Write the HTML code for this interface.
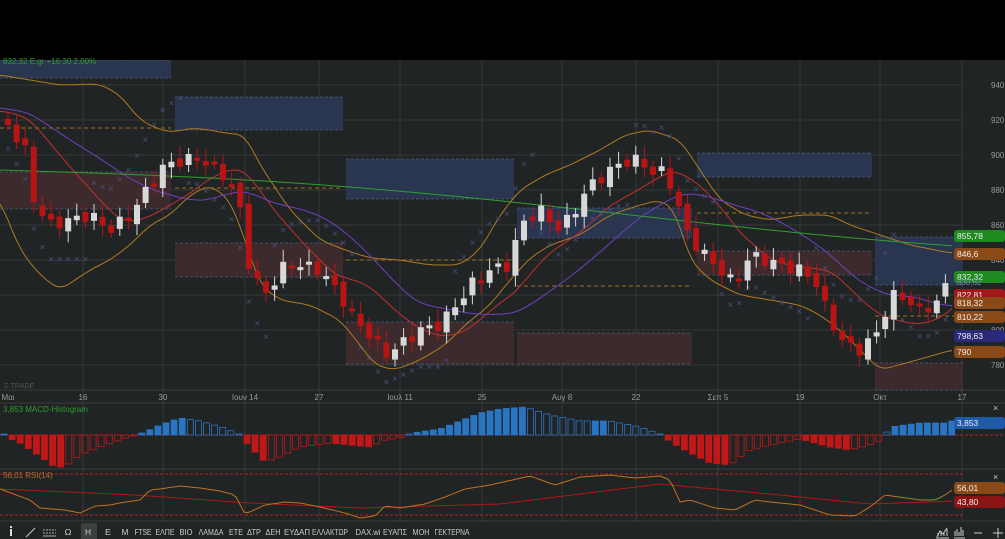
<!DOCTYPE html><html><head><meta charset="utf-8"><style>
body{margin:0;width:1005px;height:539px;overflow:hidden;background:#000;font-family:"Liberation Sans","Noto Sans CJK SC",sans-serif}
svg{position:absolute;left:0;top:0}
text{font-family:"Liberation Sans",sans-serif}
</style></head><body>
<svg id="s" width="1005" height="539" xmlns="http://www.w3.org/2000/svg">
<rect x="0" y="60" width="1005" height="479" fill="#212424"/>
<g id="g"></g>
<rect x="0" y="0" width="1005" height="60" fill="#000"/>
<text x="3" y="64" fill="#2e9e2e" font-size="8">832,32 Ε.gr +16,30 2,00%</text>
</svg>
<script>
var g=document.getElementById('g'),h='';
function A(s){h+=s}
var vx=[83,163,245,319,400,482,562,636,718,800,880,962];
vx.forEach(function(x){A('<line x1="'+x+'" y1="60" x2="'+x+'" y2="522" stroke="#353838" stroke-width="1"/>')});
var pl=[[940,85],[920,120],[900,155],[880,190],[860,225],[840,260],[820,295],[800,330],[780,365]];
pl.forEach(function(p){A('<line x1="0" y1="'+p[1]+'" x2="962" y2="'+p[1]+'" stroke="#353838"/>');A('<text x="991" y="'+(p[1]+3)+'" fill="#9a9a9a" font-size="8">'+p[0]+'</text>')});
A('<line x1="0" y1="390" x2="1005" y2="390" stroke="#3a3d3d"/><line x1="0" y1="403" x2="1005" y2="403" stroke="#3a3d3d"/><line x1="0" y1="469" x2="1005" y2="469" stroke="#3a3d3d"/><line x1="0" y1="521" x2="1005" y2="521" stroke="#3a3d3d"/>');
function Z(x,y,w,hh,c){A('<rect x="'+x+'" y="'+y+'" width="'+w+'" height="'+hh+'" fill="'+c+'"/><line x1="'+x+'" y1="'+(y+hh)+'" x2="'+(x+w)+'" y2="'+(y+hh)+'" stroke="#4a5a7a" stroke-dasharray="3,2" stroke-width=".7"/><line x1="'+x+'" y1="'+y+'" x2="'+(x+w)+'" y2="'+y+'" stroke="#4a5a7a" stroke-dasharray="3,2" stroke-width=".7"/>')}
var B='#2a3550',R='#3d2a2c';
Z(0,60,171,18,B);Z(175,97,168,33,B);Z(346,159,168,40,B);Z(517,208,175,30,B);Z(697,153,175,24,B);Z(875,237,88,48,B);
Z(0,172,171,37,R);Z(175,243,168,34,R);Z(346,322,168,42,R);Z(517,333,175,31,R);Z(697,251,175,24,R);Z(875,363,88,27,R);
[[0,128,171],[175,188,168],[346,260,168],[517,286,175],[697,213,175],[875,316,88]].forEach(function(d){A('<line x1="'+d[0]+'" y1="'+d[1]+'" x2="'+(d[0]+d[2])+'" y2="'+d[1]+'" stroke="#a07020" stroke-dasharray="4,3"/>')});
var K=[[-200,100],[4,115],[8,125],[25,150],[35,205],[50,225],[70,220],[90,215],[110,230],[130,215],[150,185],[165,165],[185,160],[200,158],[215,170],[230,180],[240,210],[250,270],[265,295],[285,265],[300,265],[320,270],[340,295],[355,320],[370,335],[385,355],[400,345],[420,330],[440,325],[460,300],[475,280],[490,270],[510,265],[520,225],[540,210],[560,230],[575,210],[590,185],[605,175],[620,163],[640,160],[655,175],[665,170],[675,195],[685,230],[700,250],[720,270],[735,285],[750,255],[765,260],[780,265],[800,270],[815,280],[830,320],[845,345],[860,350],[880,330],[890,295],[905,298],[920,310],[935,305],[952,275]];
function L(Kk,x){for(var i=0;i<Kk.length-1;i++){if(x<=Kk[i+1][0]){var t=(x-Kk[i][0])/(Kk[i+1][0]-Kk[i][0]);return Kk[i][1]+t*(Kk[i+1][1]-Kk[i][1])}}return Kk[Kk.length-1][1]}
function Y(x){return L(K,x)}
function P(f,c,w,x0,x1){var s='';x0=x0||0;x1=x1||955;for(var x=x0;x<=x1;x+=4){s+=(x==x0?'M':'L')+x+','+f(x).toFixed(1)}A('<path d="'+s+'" fill="none" stroke="'+c+'" stroke-width="'+(w||1)+'"/>')}
function sm(x,n){var s=0,c=0;for(var k=-n;k<=0;k+=3){s+=Y(x+k);c++}return s/c}
function Ls(Kk){return function(x){var s=0;for(var k=-8;k<=8;k+=2)s+=L(Kk,x+k);return s/9}}
var UK=[[-10,75],[0,75],[30,80],[60,85],[100,84],[120,95],[140,120],[160,130],[175,132],[190,128],[210,130],[225,133],[245,135],[260,165],[290,210],[320,240],[345,250],[370,258],[400,260],[430,265],[460,265],[480,250],[500,215],[520,190],[545,175],[570,165],[600,150],[625,135],[650,130],[680,140],[700,170],[720,200],[745,215],[770,220],[800,215],[830,215],[850,225],[880,235],[910,245],[950,253],[970,253]];
var DK=[[-10,195],[0,200],[20,250],[40,275],[60,290],[90,270],[110,260],[130,245],[150,225],[170,215],[190,195],[210,185],[230,200],[245,240],[260,285],[280,300],[310,305],[340,320],[360,345],[375,365],[395,370],[420,360],[445,345],[465,325],[490,305],[510,280],[530,258],[550,245],[580,235],[610,215],[640,205],[660,200],[675,210],[690,260],[710,280],[740,295],[770,300],[800,305],[820,315],[840,330],[860,350],[880,370],[910,362],[952,350],[970,350]];
P(Ls(UK),'#b07a20',1);
P(Ls(DK),'#b07a20',1);
P(function(x){return sm(x,90)},'#c03030',1);
P(function(x){return sm(x,172)},'#7040c0',1);
P(function(x){return 170+(x/955)*68-8*Math.sin(x/200)},'#30a030',1);
for(var x=8;x<952;x+=8.6){var y=Y(x),up=Math.floor(x/90)%2;var yy=y+(up?-30-((x%90)/3):25+((x%90)/4));A('<text x="'+x.toFixed(1)+'" y="'+yy.toFixed(1)+'" fill="#4a4e7a" font-size="10" text-anchor="middle">×</text>')}
var prev=Y(0);for(var i=0;i<110;i++){var x=8+i*8.6,c=Y(x)+Math.sin(i*2.3)*6,o=prev+Math.cos(i*1.7)*4;prev=c;var t=Math.min(o,c),b=Math.max(o,c);if(b-t<3)b=t+3;var col=c<o?'#d8d8d8':'#b81414';A('<line x1="'+x+'" y1="'+(t-6-(i%3)*3)+'" x2="'+x+'" y2="'+(b+5+(i%4)*2)+'" stroke="'+col+'"/><rect x="'+(x-3)+'" y="'+t+'" width="6" height="'+(b-t)+'" fill="'+col+'"/>')}
var dl=[[8,'Μαι'],[83,'16'],[163,'30'],[245,'Ιουν 14'],[319,'27'],[400,'Ιουλ 11'],[482,'25'],[562,'Αυγ 8'],[636,'22'],[718,'Σεπ 5'],[800,'19'],[880,'Οκτ'],[962,'17']];
dl.forEach(function(d){A('<text x="'+d[0]+'" y="400" fill="#9a9a9a" font-size="8" text-anchor="middle">'+d[1]+'</text>')});
A('<text x="4" y="388" fill="#555" font-size="7">Z·TRADE</text>');
function T(y,c,s){A('<rect x="954" y="'+(y-6)+'" width="51" height="12" rx="3" fill="'+c+'"/><text x="957" y="'+(y+3)+'" fill="#eee" font-size="8.5">'+s+'</text>')}
T(236,'#1f8a1f','855,78');T(254,'#8a4a18','846,6');T(277,'#1f8a1f','832,32');A('<text x="957" y="285" fill="#8080d0" font-size="8">830,62</text>');T(295,'#a01818','822,81');T(303,'#8a4a18','818,32');T(317,'#8a4a18','810,22');T(336,'#2a2a7a','798,63');T(352,'#8a4a18','790');
A('<text x="3" y="412" fill="#2e9e2e" font-size="8">3,853 MACD-Histogram</text><line x1="0" y1="435" x2="1005" y2="435" stroke="#c02020" stroke-dasharray="3,2"/>');
var MK=[[0,3],[8,-3],[20,-8],[35,-18],[55,-32],[65,-32],[80,-20],[100,-12],[120,-5],[135,0],[145,3],[160,10],[180,17],[200,14],[225,7],[240,0],[250,-12],[265,-27],[280,-22],[300,-12],[330,-8],[350,-10],[370,-12],[385,-5],[400,-3],[412,2],[440,6],[460,14],[480,22],[500,26],[525,28],[550,20],[580,14],[610,14],[640,8],[660,1],[672,-8],[690,-18],[710,-28],[730,-30],[750,-15],[770,-10],[800,-4],[830,-12],[850,-15],[870,-10],[882,-5],[890,8],[920,12],[945,12],[955,15]];
var pv=0;for(var i=0;i<118;i++){var x=1+i*8.1;if(x>958)break;var v=L(MK,x+3);if(Math.abs(v)<1)v=v<0?-1:1;var pos=v>0,col=pos?'#2a74c4':'#c01818',fill=(Math.abs(v)<Math.abs(pv))?'none':col;pv=v;var y=pos?435-v:435,hh=Math.abs(v);A('<rect x="'+x+'" y="'+y+'" width="6" height="'+hh+'" fill="'+fill+'" stroke="'+col+'" stroke-width=".8"/>')}
A('<rect x="954" y="417" width="51" height="12" rx="3" fill="#1e5aa8"/><text x="957" y="426" fill="#eee" font-size="8.5">3,853</text><text x="993" y="411" fill="#ccc" font-size="9">×</text>');
A('<line x1="0" y1="474" x2="962" y2="474" stroke="#c02020" stroke-dasharray="3,2"/><line x1="0" y1="515" x2="962" y2="515" stroke="#c02020" stroke-dasharray="3,2"/>');
A('<text x="3" y="478" fill="#b07030" font-size="8">56,01 RSI(14)</text>');
var RK=[[0,489],[30,500],[40,508],[65,510],[80,513],[95,506],[110,505],[125,502],[140,500],[150,490],[160,489],[180,486],[200,488],[220,491],[235,495],[245,514],[265,505],[285,502],[300,503],[320,507],[345,513],[360,518],[375,516],[385,506],[400,508],[425,504],[445,497],[465,489],[490,485],[530,476],[555,485],[580,477],[610,475],[635,478],[660,476],[670,480],[680,502],[690,500],[715,508],[735,510],[755,500],[770,502],[800,505],[830,515],[855,516],[870,507],[885,495],[920,500],[935,500],[945,495],[955,488]];
var SK=[[0,489],[135,495],[250,503],[360,508],[500,504],[660,484],[780,495],[870,504],[955,501]];
P(function(x){return L(SK,x)},'#b01818',1);
P(function(x){return L(RK,x)},'#c07020',1);
A('<rect x="954" y="482" width="51" height="12" rx="3" fill="#8a4a18"/><text x="957" y="491" fill="#eee" font-size="8.5">56,01</text><rect x="954" y="496" width="51" height="12" rx="3" fill="#8a1414"/><text x="957" y="505" fill="#eee" font-size="8.5">43,80</text><text x="993" y="480" fill="#ccc" font-size="9">×</text>');
var tb=[['Ω',68,7],['Η',88,6],['Ε',108,6],['Μ',125,7],['FTSE',143,17],['ΕΛΠΕ',165,19],['ΒΙΟ',186,13],['ΛΑΜΔΑ',211,25],['ΕΤΕ',236,14],['ΔΤΡ',254,14],['ΔΕΗ',273,15],['ΕΥΔΑΠ',297,26],['ΕΛΛΑΚΤΩΡ',330,36],['DAX.wi',368,25],['ΕΥΑΠΣ',395,24],['ΜΟΗ',421,17],['ΓΕΚΤΕΡΝΑ',452,35]];
A('<rect x="81" y="523" width="16" height="16" fill="#3d4040"/>');
tb.forEach(function(t){A('<text x="'+(t[1]-t[2]/2)+'" y="535" fill="#ccc" font-size="8" textLength="'+t[2]+'" lengthAdjust="spacingAndGlyphs">'+t[0]+'</text>')});
A('<rect x="10" y="529" width="2" height="7" fill="#ddd"/><rect x="10" y="526" width="2" height="2" fill="#ddd"/><line x1="26" y1="537" x2="35" y2="528" stroke="#ccc"/><line x1="43" y1="530" x2="56" y2="530" stroke="#aaa" stroke-dasharray="2,1"/><line x1="43" y1="533" x2="56" y2="533" stroke="#aaa" stroke-dasharray="2,1"/><line x1="43" y1="536" x2="56" y2="536" stroke="#aaa"/>');
A('<path d="M937,537 L940,531 L943,534 L947,528 M936,538 H949 M938,536V533 M941,536V531 M944,536V533 M947,536V529" stroke="#ccc" fill="none" stroke-width="1"/><path d="M955,536V531 M957,536V529 M959,536V532 M961,536V527 M963,536V530 M954,538H965" stroke="#ccc" fill="none"/><line x1="974" y1="533" x2="982" y2="533" stroke="#ccc"/><line x1="993" y1="533" x2="1003" y2="533" stroke="#ccc"/><line x1="998" y1="528" x2="998" y2="538" stroke="#ccc"/>');
g.innerHTML=h;
</script>
</body></html>
